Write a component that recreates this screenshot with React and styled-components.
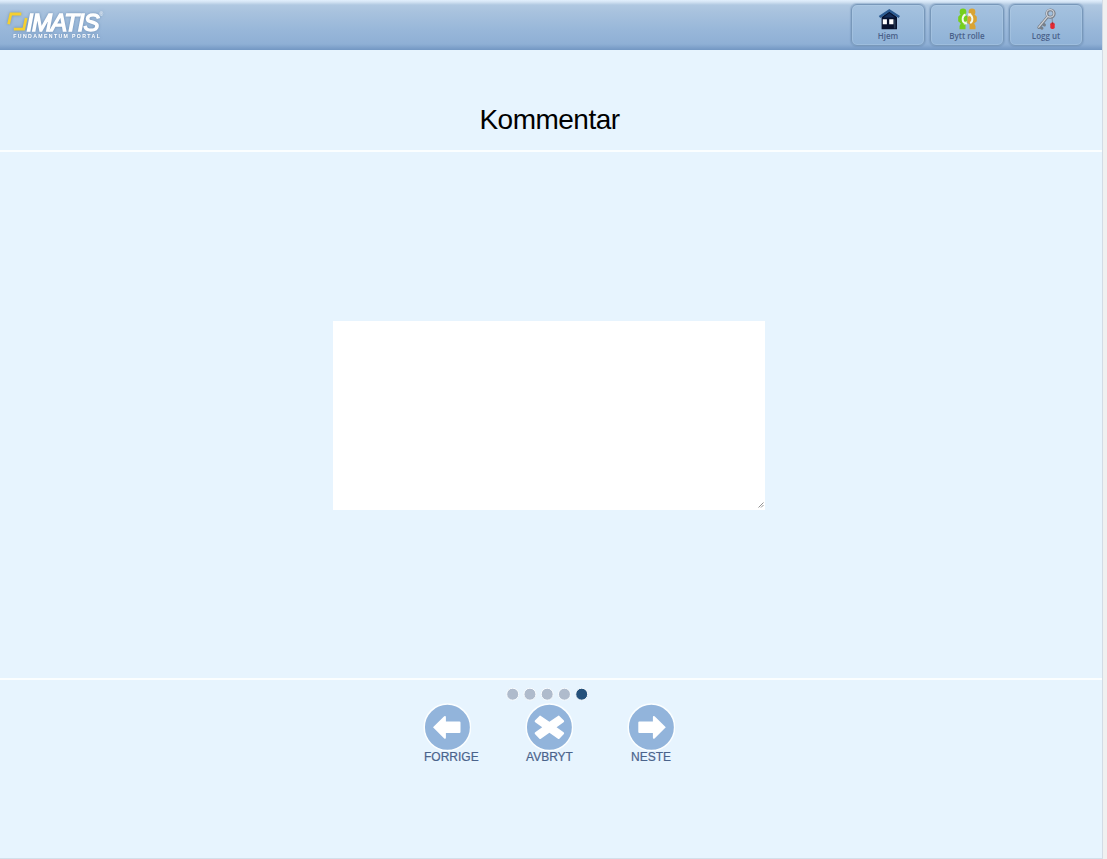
import React from "react";
import styled, { createGlobalStyle } from "styled-components";

const GlobalStyle = createGlobalStyle`
  * { box-sizing: border-box; }
  body { margin: 0; background: #f0f0f0; font-family: "Liberation Sans", Arial, sans-serif; overflow: hidden; }
`;

const Page = styled.div`
  width: 1103px;
  height: 859px;
  display: flex;
  flex-direction: column;
  background: #e7f4fe;
  border-right: 1px solid #d3dbe5;
  border-bottom: 1px solid #d3dfea;
`;

const Header = styled.header`
  height: 50px;
  flex: none;
  display: flex;
  justify-content: space-between;
  align-items: flex-start;
  padding: 4px 19px 0 5px;
  background: linear-gradient(#e2f0fd 0, #d3e3f3 2px, #b0c8e1 5px, #a8c2de 12px, #98b7d9 30px, #8fb0d5 44px, #7c9fc9 48px, #7397c2 50px);
`;

const Logo = styled.svg`
  display: block;
  width: 104px;
  height: 42px;
  margin-top: -1px;
  filter: drop-shadow(0 0 1.5px rgba(70, 105, 150, 0.55));
`;

const Toolbar = styled.nav`
  display: flex;
  gap: 5px;
`;

const ToolButton = styled.button`
  width: 74px;
  height: 42px;
  padding: 3px 0 0;
  display: flex;
  flex-direction: column;
  align-items: center;
  border: 1.5px solid #7898ba;
  border-radius: 6px;
  background: linear-gradient(#a5c2df, #8fb2d7);
  box-shadow: inset 0 0 1px 1px rgba(190, 215, 238, 0.35), 0 0 1px 0.5px rgba(100, 135, 175, 0.35);
  color: #4a6189;
  font: 600 8px/10px "Open Sans", sans-serif;

  svg { display: block; width: 24px; height: 23px; flex: none; margin-left: 2px; }
`;

const TitleBar = styled.section`
  height: 102px;
  flex: none;
  display: flex;
  justify-content: center;
  align-items: flex-start;
  padding: 54px 3px 0 0;
  border-bottom: 2px solid #fbfeff;
`;

const Title = styled.h1`
  margin: 0;
  font-size: 28px;
  font-weight: 400;
  line-height: 32px;
  letter-spacing: -0.5px;
  color: #000;
`;

const Content = styled.main`
  height: 528px;
  flex: none;
  display: flex;
  justify-content: center;
  align-items: flex-start;
  padding: 169px 4px 0 0;
  border-bottom: 2px solid #fbfeff;
`;

const CommentField = styled.div`
  width: 432px;
  height: 189px;
  display: flex;
  justify-content: flex-end;
  align-items: flex-end;
  padding: 0 1px 2px 0;
  background: #fff;

  svg { display: block; width: 6px; height: 6px; }
`;

const Footer = styled.footer`
  flex: 1;
  display: flex;
  flex-direction: column;
  align-items: center;
  padding: 8px 4px 0 0;
`;

const Dots = styled.svg`
  display: block;
  width: 88px;
  height: 13px;
  margin-right: 4px;
`;

const Dot = styled.circle`
  fill: ${(p) => (p.$active ? "#25517b" : "#afbbcc")};
  stroke: #fafdff;
  stroke-width: 1px;
`;

const Actions = styled.div`
  display: flex;
  gap: 54px;
  margin-top: 2px;
`;

const Action = styled.button`
  width: 48px;
  padding: 0;
  display: flex;
  flex-direction: column;
  align-items: ${(p) => p.$align || "center"};
  border: 0;
  background: none;
  color: #4a638b;
  font: 12px/14px "Liberation Sans", Arial, sans-serif;
  -webkit-text-stroke: 0.2px #4a638b;

  svg { display: block; width: 48px; height: 48px; flex: none; }
`;

const Label = styled.span`
  margin-left: ${(p) => p.$indent || 0}px;
  margin-top: -1px;
  white-space: nowrap;
`;

function HomeIcon() {
  return (
    <svg viewBox="0 0 24 23">
      <path d="M4.6 9 12.3 3 20 9v12.3H4.6z" fill="#07112d" />
      <path d="M12.3 5 18 9.5H6.5z" fill="#132d58" />
      <path d="M2.5 9 12.3 2.4 22.3 9" fill="none" stroke="#2b5a90" strokeWidth="2.5" />
      <path d="M5.8 11.2h4.1v5H5.800zM12.2 11.2h4.3v5h-4.300z" fill="#fff" />
      <path d="M16.8 11.5h1.8v9h-1.8z" fill="#24364f" />
    </svg>
  );
}

function PersonShape({ color, mirrored }) {
  return (
    <g fill={color} transform={mirrored ? "matrix(-1 0 0 1 23 0)" : undefined}>
      <circle cx="7" cy="4" r="3.4" />
      <path d="M4.5 6.500h5L11.500 8.500v6.500l-2 1.500v4.700H3.500V18l1.300-2.500-2.600-2.300V8.800z" />
    </g>
  );
}

function SwapRoleIcon() {
  return (
    <svg viewBox="0 0 24 23">
      <PersonShape color="#76cf1d" />
      <PersonShape color="#d9a333" mirrored />
      <path d="M9.5 6.5C5.8 8 5.8 13.600 8.800 15.200M13.500 6.500c3.700 1.500 3.700 7.100.7 8.700" fill="none" stroke="#f5faed" strokeWidth="1.900" />
      <path d="m7.600 16.500 3.600-.3-.9-3.400zM15.400 5.200l-3.600.3.900 3.400z" fill="#f5faed" />
    </svg>
  );
}

function KeyIcon() {
  return (
    <svg viewBox="0 0 24 23">
      <g fill="none" strokeLinecap="round">
        <path d="M12.5 8.8 3.8 19.5M4.2 18.500l2.800 1.800M7 15l2.500 2" stroke="#777f89" strokeWidth="2.900" />
        <circle cx="15.5" cy="5.600" r="3.700" stroke="#777b83" strokeWidth="2.900" />
        <path d="M12.5 8.600 3.800 19.200" stroke="#cfd2d6" strokeWidth="1.300" />
        <circle cx="15.2" cy="5.400" r="3.700" stroke="#cbd0d7" strokeWidth="1.300" />
        <path d="M17 9.500 17.500 15" stroke="#858c98" strokeWidth="1" />
      </g>
      <rect x="15.3" y="14.500" width="4.400" height="6.500" rx="1.800" fill="#e32932" />
      <path d="M17.500 14.500v1.700" stroke="#8c343d" />
    </svg>
  );
}

const tools = [
  { label: "Hjem", Icon: HomeIcon },
  { label: "Bytt rolle", Icon: SwapRoleIcon },
  { label: "Logg ut", Icon: KeyIcon },
];

const arrowLeft = "M9.6 24 20.800 13q1.700-.9 1.700 1v4.200h13.600q1 0 1 1v9.600q0 1-1 1H22.500v4.400q0 1.900-1.700 1z";
const arrowRight = "M38.400 24 27.200 13q-1.700-.9-1.700 1v4.200H11.900q-1 0-1 1v9.600q0 1 1 1H25.500v4.400q0 1.900 1.700 1z";

const actions = [
  { label: "FORRIGE", align: "flex-start", indent: 1, icon: <path d={arrowLeft} /> },
  {
    label: "AVBRYT",
    indent: 1,
    icon: (
      <path
        d="M15.500 12.600 24 18.500 32.500 12.600q1-.7 1.700.3l4.300 4.400q.7 1-.3 1.700L31.200 24l7 5q1 .7.3 1.700l-4.300 4.400q-.7 1-1.700.3L24 29.500 15.500 35.400q-1 .7-1.700-.3l-4.300-4.400q-.7-1 .3-1.700L16.800 24 9.800 19q-1-.7-.3-1.700l4.300-4.400q.7-1 1.700-.3z"
      />
    ),
  },
  { label: "NESTE", icon: <path d={arrowRight} /> },
];

export default function App() {
  return (
    <>
      <GlobalStyle />
      <Page>
        <Header>
          <Logo viewBox="0 0 104 42">
            <g fill="none" stroke="#f5cf31" strokeWidth="2.8">
              <path d="M3.6 21.200 5.900 11H16.300" />
              <path d="M8.800 26.200h9.900L21.200 15" />
            </g>
            <text x="21.5" y="27.500" textLength="73" lengthAdjust="spacing" fill="#fff" stroke="#fff" strokeWidth="1.400" fontFamily="Liberation Sans, Arial, sans-serif" fontSize="24" fontStyle="italic">IMATIS</text>
            <text x="94.500" y="13" fill="#fff" fontFamily="Liberation Sans, Arial, sans-serif" fontSize="5">®</text>
            <text x="8.300" y="35" textLength="86.500" fill="#fff" fontFamily="Liberation Sans, Arial, sans-serif" fontSize="5.200" fontWeight="bold">FUNDAMENTUM PORTAL</text>
          </Logo>
          <Toolbar>
            {tools.map(({ label, Icon }) => (
              <ToolButton key={label}><Icon />{label}</ToolButton>
            ))}
          </Toolbar>
        </Header>
        <TitleBar><Title>Kommentar</Title></TitleBar>
        <Content>
          <CommentField role="textbox" aria-label="Kommentar">
            <svg viewBox="0 0 6 6"><path d="M.5 5.500l5-5M3 5.500 5.500 3" stroke="#929292" fill="none" /></svg>
          </CommentField>
        </Content>
        <Footer>
          <Dots viewBox="0 0 88 13">
            {[0, 1, 2, 3, 4].map((i) => (
              <Dot key={i} cx={9.7 + i * 17.250} cy="6.200" r="6" $active={i === 4} />
            ))}
          </Dots>
          <Actions>
            {actions.map(({ label, align, indent, icon }) => (
              <Action key={label} $align={align}>
                <svg viewBox="-0.4 -0.3 48 48">
                  <circle cx="24" cy="24" r="23.200" fill="#92b4db" stroke="#fbfeff" strokeWidth="1.500" />
                  <g fill="#fff">{icon}</g>
                </svg>
                <Label $indent={indent}>{label}</Label>
              </Action>
            ))}
          </Actions>
        </Footer>
      </Page>
    </>
  );
}
